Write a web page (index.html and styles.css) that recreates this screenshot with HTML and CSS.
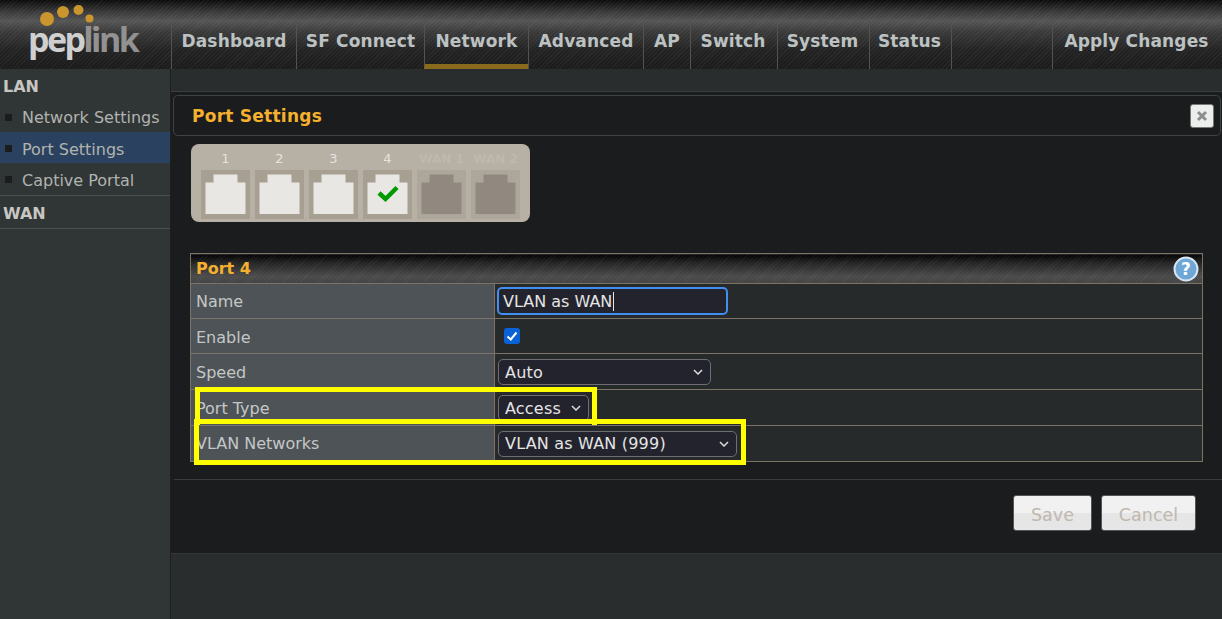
FILE: index.html
```html
<!DOCTYPE html>
<html lang="en">
<head>
<meta charset="utf-8">
<title>Port Settings</title>
<link rel="stylesheet" href="styles.css">
</head>
<body>
<svg class="defs" width="0" height="0" aria-hidden="true">
  <symbol id="rj45" viewBox="0 0 49 49">
    <path d="M12.500 4.500H36.500V12.500H44.500V44H4.500V12.500H12.500Z"/>
  </symbol>
</svg>
<header class="topbar">
  <div class="logo">
    <svg class="logo-dots" width="90" height="32" viewBox="0 0 90 32">
      <circle cx="7" cy="19" r="7"/>
      <circle cx="23" cy="12" r="6"/>
      <circle cx="38.500" cy="10" r="5"/>
      <circle cx="49.500" cy="18.500" r="4"/>
      <circle cx="56" cy="28.500" r="2.500"/>
    </svg>
    <div class="logo-text">pep<span class="logo-link">link</span></div>
  </div>
  <nav class="nav">
    <a class="nav-item w-dash">Dashboard</a>
    <a class="nav-item w-sf">SF Connect</a>
    <a class="nav-item w-net active">Network</a>
    <a class="nav-item w-adv">Advanced</a>
    <a class="nav-item w-ap">AP</a>
    <a class="nav-item w-sw">Switch</a>
    <a class="nav-item w-sys">System</a>
    <a class="nav-item w-stat">Status</a>
    <span class="nav-spacer"></span>
    <a class="nav-item w-apply">Apply Changes</a>
  </nav>
</header>
<div class="shell">
  <aside class="sidebar">
    <div class="side-head">LAN</div>
    <a class="side-item">Network Settings</a>
    <a class="side-item current">Port Settings</a>
    <a class="side-item last">Captive Portal</a>
    <div class="side-head wan">WAN</div>
  </aside>
  <main class="main">
    <section class="panel">
      <div class="panel-title">
        <h1>Port Settings</h1>
        <button class="close" aria-label="Close">
          <svg width="12" height="12" viewBox="0 0 12 12"><path d="M2 2L10 10M10 2L2 10"/></svg>
        </button>
      </div>
      <div class="ports">
        <div class="port"><span class="port-label">1</span><div class="jack"><svg class="rj" width="49" height="49"><use href="#rj45"/></svg></div></div>
        <div class="port"><span class="port-label">2</span><div class="jack"><svg class="rj" width="49" height="49"><use href="#rj45"/></svg></div></div>
        <div class="port"><span class="port-label">3</span><div class="jack"><svg class="rj" width="49" height="49"><use href="#rj45"/></svg></div></div>
        <div class="port"><span class="port-label">4</span><div class="jack"><svg class="rj" width="49" height="49"><use href="#rj45"/></svg>
          <svg class="tick" width="24" height="20" viewBox="0 0 24 20"><path d="M3 10L9.500 16L21 4.500"/></svg></div></div>
        <div class="port off"><span class="port-label">WAN 1</span><div class="jack"><svg class="rj" width="49" height="49"><use href="#rj45"/></svg></div></div>
        <div class="port off"><span class="port-label">WAN 2</span><div class="jack"><svg class="rj" width="49" height="49"><use href="#rj45"/></svg></div></div>
      </div>
      <table class="form">
        <tr class="form-head">
          <th colspan="2">
            <div class="form-head-in"><span>Port 4</span>
              <svg width="26" height="26" viewBox="0 0 26 26"><circle cx="13" cy="13" r="11.500" fill="#6ea6d6" stroke="#d7e6f2" stroke-width="2"/><text x="13" y="19" text-anchor="middle" class="help-q">?</text></svg>
            </div>
          </th>
        </tr>
        <tr class="r-name">
          <td class="lab">Name</td>
          <td class="val"><div class="field"><span class="caret">VLAN as WAN</span></div></td>
        </tr>
        <tr class="r-en">
          <td class="lab nudge">Enable</td>
          <td class="val"><span class="check"><svg width="16" height="16" viewBox="0 0 16 16"><path d="M3.500 8.500L6.800 11.500L12.500 4.500"/></svg></span></td>
        </tr>
        <tr class="r-sp">
          <td class="lab nudge">Speed</td>
          <td class="val"><div class="sel s-auto"><span>Auto</span><svg width="10" height="6" viewBox="0 0 10 6"><path d="M1 1L5 5L9 1"/></svg></div></td>
        </tr>
        <tr class="r-pt">
          <td class="lab nudge">Port Type</td>
          <td class="val"><div class="sel s-acc"><span>Access</span><svg width="10" height="6" viewBox="0 0 10 6"><path d="M1 1L5 5L9 1"/></svg></div></td>
        </tr>
        <tr class="r-vl">
          <td class="lab">VLAN Networks</td>
          <td class="val"><div class="sel s-vlan"><span>VLAN as WAN (999)</span><svg width="10" height="6" viewBox="0 0 10 6"><path d="M1 1L5 5L9 1"/></svg></div></td>
        </tr>
      </table>
      <div class="actions">
        <button class="btn b-save">Save</button>
        <button class="btn b-cancel">Cancel</button>
      </div>
    </section>
  </main>
</div>
<div class="mark m-one"></div>
<div class="mark m-two"></div>
</body>
</html>
```
FILE: styles.css
```css
* { box-sizing: border-box; }
html, body { height: 100%; }
body {
  margin: 0;
  height: 619px;
  overflow: hidden;
  background: #292d2e;
  font-family: "DejaVu Sans", sans-serif;
  color: #c9c9c4;
  position: relative;
}
.defs { position: absolute; }

.topbar {
  height: 69px;
  display: flex;
  background:
    repeating-linear-gradient(135deg, rgba(255,255,255,.045) 0 1px, rgba(0,0,0,0) 1px 3px),
    linear-gradient(180deg, #0c0c0c 0, #3a3a3a 12px, #555 21px, #3a3a3a 32px, #232323 50px, #1b1b1b 69px);
}
.logo { width: 171px; flex: none; position: relative; }
.logo-dots { position: absolute; left: 40px; top: 0; fill: #c9952c; }
.logo-text {
  position: absolute;
  left: 28px;
  top: 9px;
  font-family: "Open Sans", sans-serif;
  font-weight: 700;
  font-size: 34px;
  letter-spacing: -2.600px;
  line-height: 60px;
  color: #cfcfcf;
}
.logo-link { color: #929292; }

.nav { flex: 1; display: flex; padding-top: 21px; }
.nav-item {
  height: 48px;
  padding-top: 8px;
  border-left: 1px solid #56524b;
  text-align: center;
  font-family: "DejaVu Sans", sans-serif;
  font-weight: 700;
  font-size: 17px;
  letter-spacing: .15px;
  line-height: 24px;
  color: #bcc2c2;
  white-space: nowrap;
  overflow: hidden;
}
.w-dash { width: 125px; }
.w-sf { width: 128px; }
.w-net { width: 104px; }
.w-adv { width: 115px; }
.w-ap { width: 47px; }
.w-sw { width: 87px; padding-right: 2px; }
.w-sys { width: 92px; padding-right: 2px; }
.w-stat { width: 82px; padding-right: 2px; }
.nav-spacer { width: 101px; border-left: 1px solid #56524b; }
.w-apply { width: 170px; padding-right: 2px; }
.active { border-bottom: 5px solid #8a6a1c; }

.shell { display: flex; height: 550px; }
.sidebar {
  width: 170px;
  flex: none;
  background: #303536;
  font-size: 16px;
}
.side-head {
  height: 32px;
  padding: 8px 0 0 3px;
  font-weight: 700;
  line-height: 20px;
  color: #c6c6c2;
}
.wan { height: 33px; border-bottom: 1px solid #4a4e4f; }
.side-item {
  display: block;
  height: 31px;
  line-height: 31px;
  padding: 1px 0 0 22px;
  position: relative;
  color: #b1b3af;
  white-space: nowrap;
}
.side-item::before {
  content: "";
  position: absolute;
  left: 5px;
  top: 13px;
  width: 7px;
  height: 7px;
  background: #1b1c1c;
}
.current { background: #2a4260; padding-top: 2px; }
.last { height: 33px; padding-top: 2px; border-bottom: 1px solid #4a4e4f; }

.main {
  flex: 1;
  padding-top: 22px;
  border-left: 1px solid #1c1e1f;
  min-width: 0;
}
.panel {
  height: 463px;
  background: #1b1c1e;
  border-top: 1px solid #3b3e40;
  border-bottom: 1px solid #34383a;
  padding: 3px 0 0 2px;
}
.panel-title {
  height: 41px;
  margin-right: 1px;
  border: 1px solid #3f4244;
  border-radius: 5px;
  display: flex;
  align-items: center;
  justify-content: space-between;
  padding: 0 6px 0 18px;
}
.panel-title h1 {
  margin: 0;
  font-size: 17px;
  letter-spacing: .25px;
  font-weight: 700;
  color: #f5b02e;
}
.close {
  width: 24px;
  height: 24px;
  padding: 0;
  border: 1px solid #777;
  border-radius: 3px;
  background: #eceded;
  display: flex;
  align-items: center;
  justify-content: center;
}
.close svg { fill: none; stroke: #8e8e8e; stroke-width: 3; }

.ports {
  width: 339px;
  height: 78px;
  margin: 8px 0 31px 18px;
  padding: 6px 10px 0;
  display: flex;
  gap: 5px;
  background: #b7b0a5;
  border-radius: 8px;
}
.port { width: 49px; flex: none; display: flex; flex-direction: column; }
.port-label {
  height: 20px;
  text-align: center;
  font-size: 13px;
  line-height: 18px;
  white-space: nowrap;
  color: #e6e3dd;
}
.jack { width: 49px; height: 49px; background: #a79f92; position: relative; }
.rj { display: block; fill: #e8e7e3; }
.tick {
  position: absolute;
  left: 13px;
  top: 13px;
  fill: none;
  stroke: #009a00;
  stroke-width: 4.500;
}
.off .port-label { color: #bfb8ad; font-weight: 700; font-size: 12px; }
.off .jack { background: #ada69a; }
.off .rj { fill: #918980; }

.form {
  width: 1013px;
  margin-left: 17px;
  border-collapse: collapse;
  font-size: 16px;
}
.form th, .form td { border: 1px solid #7b7365; padding: 0; }
.form-head th {
  height: 30px;
  background:
    repeating-linear-gradient(135deg, rgba(255,255,255,.06) 0 1px, rgba(0,0,0,0) 1px 3px),
    linear-gradient(180deg, #000 0, #222 8px, #4a4a4a 22px, #404040 30px);
  text-align: left;
}
.form-head-in {
  display: flex;
  align-items: center;
  justify-content: space-between;
  padding: 0 3px 0 5px;
  font-weight: 700;
  color: #f5b02e;
}
.form-head-in svg { display: block; }
.help-q { fill: #fff; font-weight: 700; font-size: 17px; font-family: "DejaVu Sans", sans-serif; }
.lab { width: 304px; padding-left: 5px !important; background: #4d5356; color: #c4c7c6; }
.nudge { padding-top: 2px !important; }
.val { background: #262a2b; padding-left: 2px !important; color: #e5e5e5; }
.r-name td { height: 35px; }
.r-en td { height: 35px; }
.r-sp td { height: 36px; }
.r-pt td { height: 36px; }
.r-vl td { height: 36px; }

.field {
  width: 231px;
  height: 28px;
  border: 2px solid #3f8ef0;
  border-radius: 5px;
  background: #23232e;
  padding: 1px 0 0 4px;
  line-height: 24px;
}
.caret { border-right: 1px solid #e5e5e5; padding-right: 1px; }
.check {
  display: block;
  width: 16px;
  height: 16px;
  margin-left: 7px;
  border-radius: 3px;
  background: #0b62d6;
}
.check svg { display: block; fill: none; stroke: #fff; stroke-width: 2; }
.sel {
  height: 26px;
  margin-left: 1px;
  border: 1px solid #6e6e74;
  border-radius: 5px;
  background: #23232e;
  display: flex;
  align-items: center;
  justify-content: space-between;
  letter-spacing: .2px;
  padding: 0 7px 0 6px;
}
.sel svg { fill: none; stroke: #dcdcdc; stroke-width: 1.500; }
.s-auto { width: 213px; }
.s-auto span, .s-acc span { margin-top: 2px; }
.s-acc { width: 91px; }
.s-vlan { width: 239px; }

.actions {
  height: 75px;
  margin: 17px 0 0 1px;
  border-top: 1px solid #3a3d3f;
  padding: 15px 26px 0 0;
  display: flex;
  justify-content: flex-end;
  gap: 9px;
}
.btn {
  height: 36px;
  border: 1px solid #555;
  border-radius: 3px;
  background: linear-gradient(180deg, #f1f1f1 0 50%, #e6e6e6 50% 100%);
  color: #bfb8ae;
  font-family: "DejaVu Sans", sans-serif;
  font-size: 17.500px;
  padding: 3px 0 0;
}
.b-save { width: 79px; }
.b-cancel { width: 95px; }

.mark {
  position: absolute;
  border: 5px solid #ffff00;
  pointer-events: none;
}
.m-one { left: 195px; top: 387px; width: 402px; height: 38px; border-bottom: 0; }
.m-two { left: 194px; top: 419px; width: 552px; height: 46px; }
```
